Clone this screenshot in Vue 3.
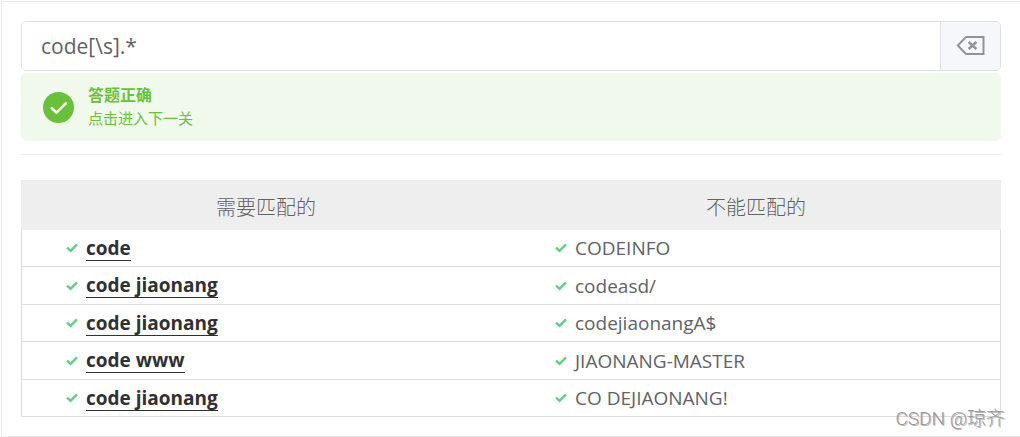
<template>
  <div class="practice-card">
    <div class="input-group">
      <input v-model="pattern" type="text" class="pattern-input" aria-label="正则表达式" spellcheck="false">
      <button type="button" class="clear-button" aria-label="清空" @click="clear">
        <svg width="30" height="22" viewBox="0 0 30 22" fill="none" stroke="#909399">
          <path d="M10 2H27.5V19H10L1.8 10.5Z" stroke-width="2" />
          <path d="M12.6 7L20.4 14M20.4 7L12.6 14" stroke-width="2.4" />
        </svg>
      </button>
    </div>

    <div class="alert" role="alert">
      <svg class="alert-icon" width="31" height="31" viewBox="0 0 31 31">
        <circle cx="15.5" cy="15.5" r="15.5" fill="#67c23a" />
        <path d="M8.8 16.2L13.4 20.6L22.8 11.4" fill="none" stroke="#fff" stroke-width="2.6" stroke-linecap="round" stroke-linejoin="round" />
      </svg>
      <div class="alert-content">
        <span class="alert-title">答题正确</span>
        <a href="#next" class="alert-link">点击进入下一关</a>
      </div>
    </div>

    <hr class="divider">

    <table class="match-table">
      <thead>
        <tr>
          <th>需要匹配的</th>
          <th>不能匹配的</th>
        </tr>
      </thead>
      <tbody>
        <tr v-for="(row, index) in rows" :key="index">
          <td>
            <div class="cell">
              <svg class="check" width="12" height="10" viewBox="0 0 12 10">
                <path d="M1 4.6L4.6 7.8L11 1.4" />
              </svg>
              <span class="matched">{{ row.need }}</span>
            </div>
          </td>
          <td>
            <div class="cell">
              <svg class="check" width="12" height="10" viewBox="0 0 12 10">
                <path d="M1 4.6L4.6 7.8L11 1.4" />
              </svg>
              <span>{{ row.avoid }}</span>
            </div>
          </td>
        </tr>
      </tbody>
    </table>

    <span class="watermark">CSDN @琼齐</span>
  </div>
</template>

<script setup>
import { ref } from 'vue';

const pattern = ref('code[\\s].*');

// 左列需要匹配，右列不能匹配
const rows = [
  { need: 'code', avoid: 'CODEINFO' },
  { need: 'code jiaonang', avoid: 'codeasd/' },
  { need: 'code jiaonang', avoid: 'codejiaonangA$' },
  { need: 'code www', avoid: 'JIAONANG-MASTER' },
  { need: 'code jiaonang', avoid: 'CO DEJIAONANG!' },
];

const clear = () => {
  pattern.value = '';
};
</script>

<style>
body {
  background-color: #fff;
}
</style>

<style scoped>
.practice-card {
  position: relative;
  box-sizing: border-box;
  margin: 1px 0 0 1px;
  padding: 19px;
  border: 1px solid #ebebeb;
  border-right: none;
  color: #606266;
  font-family: "Open Sans", "Noto Sans CJK SC", sans-serif;
}

.input-group {
  display: flex;
  box-sizing: border-box;
  height: 50px;
  border: 1px solid #dcdfe6;
  border-radius: 5px;
  overflow: hidden;
}

.pattern-input {
  flex: 1;
  min-width: 0;
  padding: 0 19px;
  border: none;
  outline: none;
  background-color: #fff;
  color: #606266;
  font-family: inherit;
  font-size: 21px;
}

.clear-button {
  display: flex;
  align-items: center;
  justify-content: center;
  width: 60px;
  padding: 0;
  border: none;
  border-left: 1px solid #dcdfe6;
  background-color: #f5f7fa;
  cursor: pointer;
}

.alert {
  display: flex;
  align-items: center;
  gap: 14px;
  box-sizing: border-box;
  height: 68px;
  margin-top: 2px;
  padding: 0 22px;
  border-radius: 5px;
  background-color: #f0f9eb;
  color: #67c23a;
}

.alert-content {
  display: flex;
  flex-direction: column;
  padding-bottom: 2px;
}

.alert-title {
  font-size: 16px;
  font-weight: bold;
  line-height: 24px;
}

.alert-link {
  color: #67c23a;
  font-size: 15px;
  line-height: 22px;
  text-decoration: none;
}

.divider {
  height: 1px;
  margin: 13px 0 25px;
  border: none;
  background-color: #ebebeb;
}

.match-table {
  width: 100%;
  border-spacing: 0;
  table-layout: fixed;
}

th {
  box-sizing: border-box;
  height: 50px;
  padding: 2px 0 0;
  background-color: #eee;
  font-size: 20px;
  font-weight: 300;
}

td {
  box-sizing: border-box;
  height: 37px;
  padding: 0 0 0 44px;
  border-bottom: 1px solid #ddd;
  font-size: 19px;
}

tr:nth-child(even) td {
  height: 38px;
}

td:first-child {
  border-left: 1px solid #ddd;
}

td:last-child {
  border-right: 1px solid #ddd;
}

.cell {
  display: flex;
  align-items: center;
  gap: 8px;
  line-height: 24px;
}

.check {
  fill: none;
  stroke: #5fcf80;
  stroke-width: 2.4;
}

.matched {
  border-bottom: 1px solid #303133;
  color: #303133;
  font-weight: bold;
}

.watermark {
  position: absolute;
  right: 15px;
  bottom: 3px;
  color: #999;
  font-family: Roboto, "Noto Sans CJK SC", sans-serif;
  font-size: 19px;
  font-weight: 300;
  line-height: 28px;
  text-shadow: 1px 1px 0 #bbb;
}
</style>
